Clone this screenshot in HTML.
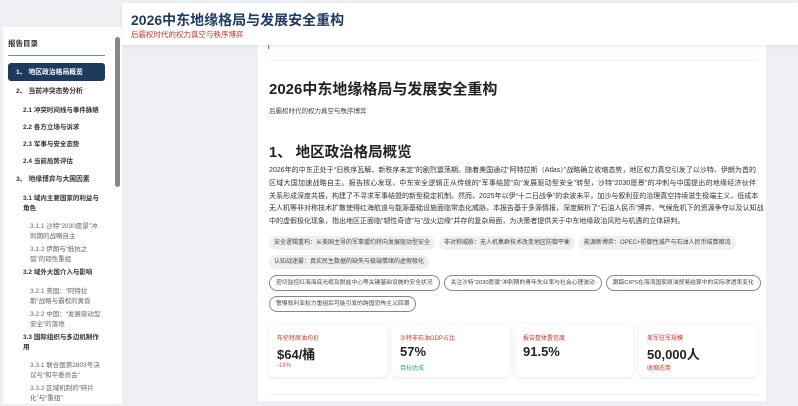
<!DOCTYPE html>
<html><head><meta charset="utf-8"><style>
*{margin:0;padding:0;box-sizing:border-box}
body{width:798px;height:406px;overflow:hidden;background:#eef0f3;font-family:"Liberation Sans","Noto Sans CJK SC",sans-serif;position:relative;color:#333}
.hdr{position:absolute;left:122px;top:3px;width:676px;height:42px;background:#fff;box-shadow:0 2px 4px rgba(0,0,0,.06);z-index:2}
.hdr h1{position:absolute;left:9px;top:7px;font-size:14px;color:#1e3a5f;font-weight:bold}
.hdr p{position:absolute;left:9px;top:26px;font-size:7.5px;color:#c0392b}
.side{position:absolute;left:3px;top:27px;width:119px;height:377px;background:#fff;overflow:hidden}
.side .t{position:absolute;left:5px;top:11px;font-size:7.5px;font-weight:bold;color:#333}
.side .ln{position:absolute;left:5px;top:28px;width:97px;height:1px;background:#7a8aa0}
.sb{position:absolute;left:112px;top:10px;width:5px;height:150px;background:#888;border-radius:3px}
.it{position:absolute;font-size:6.5px;font-weight:bold;color:#333;line-height:9.5px}
.act{left:5px;top:36px;width:97px;height:18px;background:#1e3a5f;color:#fff;border-radius:3px;padding:4.5px 0 0 8px;font-size:6.8px}
.s3{font-weight:normal;color:#666}
.card{position:absolute;left:258px;top:45px;width:508px;height:356px;background:#fff}
.red{position:absolute;left:10px;top:0;width:1px;height:4px;background:#e05050}
.topl{position:absolute;left:10px;top:15px;width:490px;height:1px;background:#f2f2f2}
h2.m{position:absolute;left:11px;top:33px;font-size:15px;font-weight:bold;color:#222}
.sub{position:absolute;left:11px;top:60px;font-size:6.5px;color:#444}
h3{position:absolute;left:11px;top:96px;font-size:14.5px;font-weight:bold;color:#222}
.para{position:absolute;left:11px;top:120px;width:487px;font-size:7px;line-height:12.8px;color:#333}
.para div{white-space:nowrap;text-align:justify;text-align-last:justify;height:12.8px}
.para div.last{text-align-last:left}
.tags{position:absolute;left:11px;top:191px;width:495px;display:flex;flex-wrap:wrap;row-gap:5px;column-gap:4px}
.tag{display:block;background:#f0f0f0;border-radius:8px;font-size:6px;color:#444;padding:0 5px;height:14px;line-height:14px;white-space:nowrap}
.otags{position:absolute;left:11px;top:230px;width:495px;display:flex;flex-wrap:wrap;row-gap:5px;column-gap:4px}
.otag{display:block;border:1px solid #7d8a9a;border-radius:8px;font-size:5.8px;color:#444;padding:0 6px;height:16px;line-height:14px;white-space:nowrap}
.kp{position:absolute;top:279px;width:118px;height:53px;background:#fff;border-radius:6px;box-shadow:0 1px 5px rgba(0,0,0,.1)}
.kp .l{position:absolute;left:8px;top:9px;font-size:6px;color:#c0392b}
.kp .v{position:absolute;left:8px;top:20px;font-size:13px;font-weight:bold;color:#222}
.kp .d{position:absolute;left:8px;top:39px;font-size:6px}
.bl{position:absolute;left:11px;top:349px;width:488px;height:1px;background:#eee}
</style></head><body>
<div class="hdr"><h1>2026中东地缘格局与发展安全重构</h1><p>后霸权时代的权力真空与秩序博弈</p></div>
<div class="side">
<div class="t">报告目录</div><div class="ln"></div><div class="sb"></div>
<div class="it act">1、 地区政治格局概览</div>
<div class="it" style="left:13px;top:60px;font-size:6.8px">2、 当前冲突态势分析</div>
<div class="it" style="left:20px;top:79px">2.1 冲突时间线与事件脉络</div>
<div class="it" style="left:20px;top:96px">2.2 各方立场与诉求</div>
<div class="it" style="left:20px;top:113px">2.3 军事与安全态势</div>
<div class="it" style="left:20px;top:130px">2.4 当前局势评估</div>
<div class="it" style="left:13px;top:148px;font-size:6.8px">3、 地缘博弈与大国因素</div>
<div class="it" style="left:20px;top:167px;width:78px">3.1 域内主要国家的利益与角色</div>
<div class="it s3" style="left:27px;top:195px;width:72px">3.1.1 沙特“2030愿景”冲刺期的战略自主</div>
<div class="it s3" style="left:27px;top:218px;width:72px">3.1.2 伊朗与“抵抗之弧”的韧性重组</div>
<div class="it" style="left:20px;top:241px">3.2 域外大国介入与影响</div>
<div class="it s3" style="left:27px;top:260px;width:72px">3.2.1 美国：“阿特拉斯”战略与霸权的黄昏</div>
<div class="it s3" style="left:27px;top:283px;width:72px">3.2.2 中国：“发展驱动型安全”的落地</div>
<div class="it" style="left:20px;top:306px;width:78px">3.3 国际组织与多边机制作用</div>
<div class="it s3" style="left:27px;top:334px;width:72px">3.3.1 联合国第2803号决议与“和平委员会”</div>
<div class="it s3" style="left:27px;top:357px;width:72px">3.3.2 区域机制的“碎片化”与“重组”</div>
</div>
<div class="card">
<div class="red"></div><div class="topl"></div>
<h2 class="m">2026中东地缘格局与发展安全重构</h2>
<div class="sub">后霸权时代的权力真空与秩序博弈</div>
<h3>1、 地区政治格局概览</h3>
<div class="para">
<div>2026年的中东正处于“旧秩序瓦解、新秩序未定”的剧烈震荡期。随着美国通过“阿特拉斯（Atlas）”战略确立收缩态势，地区权力真空引发了以沙特、伊朗为首的</div>
<div>区域大国加速战略自主。报告核心发现，中东安全逻辑正从传统的“军事结盟”向“发展驱动型安全”转型，沙特“2030愿景”的冲刺与中国提出的地缘经济伙伴</div>
<div>关系形成深度共振，构建了不寻求军事结盟的新型稳定机制。然而，2025年以伊“十二日战争”的余波未平，加沙与叙利亚的治理真空持续滋生极端主义，低成本</div>
<div>无人机等非对称技术扩散使得红海航道与能源基础设施面临常态化威胁。本报告基于多源情报，深度解析了“石油人民币”博弈、气候危机下的资源争夺以及认知战</div>
<div class="last">中的虚假极化现象，指出地区正面临“韧性奇迹”与“战火边缘”并存的复杂局面，为决策者提供关于中东地缘政治风险与机遇的立体研判。</div>
</div>
<div class="tags"><span class="tag">安全逻辑重构：从美国主导的军事盟约转向发展驱动型安全</span><span class="tag">非对称威胁：无人机集群技术改变地区防御平衡</span><span class="tag">能源新博弈：OPEC+防御性减产与石油人民币结算暗流</span><span class="tag">认知战迷雾：真实民生数据的缺失与极端情绪的虚假极化</span></div>
<div class="otags"><span class="otag">密切监控红海海底光缆及脱盐中心等关键基础设施的安全状况</span><span class="otag">关注沙特“2030愿景”冲刺期的青年失业率与社会心理波动</span><span class="otag">跟踪CIPS在海湾国家原油贸易结算中的实际渗透率变化</span><span class="otag">警惕叙利亚权力重组后可能引发的跨国恐怖主义回潮</span></div>
<div class="kp" style="left:11px"><div class="l">布伦特原油均价</div><div class="v">$64/桶</div><div class="d" style="color:#e05050">-18%</div></div>
<div class="kp" style="left:134px"><div class="l">沙特非石油GDP占比</div><div class="v">57%</div><div class="d" style="color:#27ae60">目标达成</div></div>
<div class="kp" style="left:257px"><div class="l">报告整体置信度</div><div class="v">91.5%</div></div>
<div class="kp" style="left:381px"><div class="l">美军驻军规模</div><div class="v">50,000人</div><div class="d" style="color:#c0392b">收缩态势</div></div>
<div class="bl"></div>
</div>
</body></html>
